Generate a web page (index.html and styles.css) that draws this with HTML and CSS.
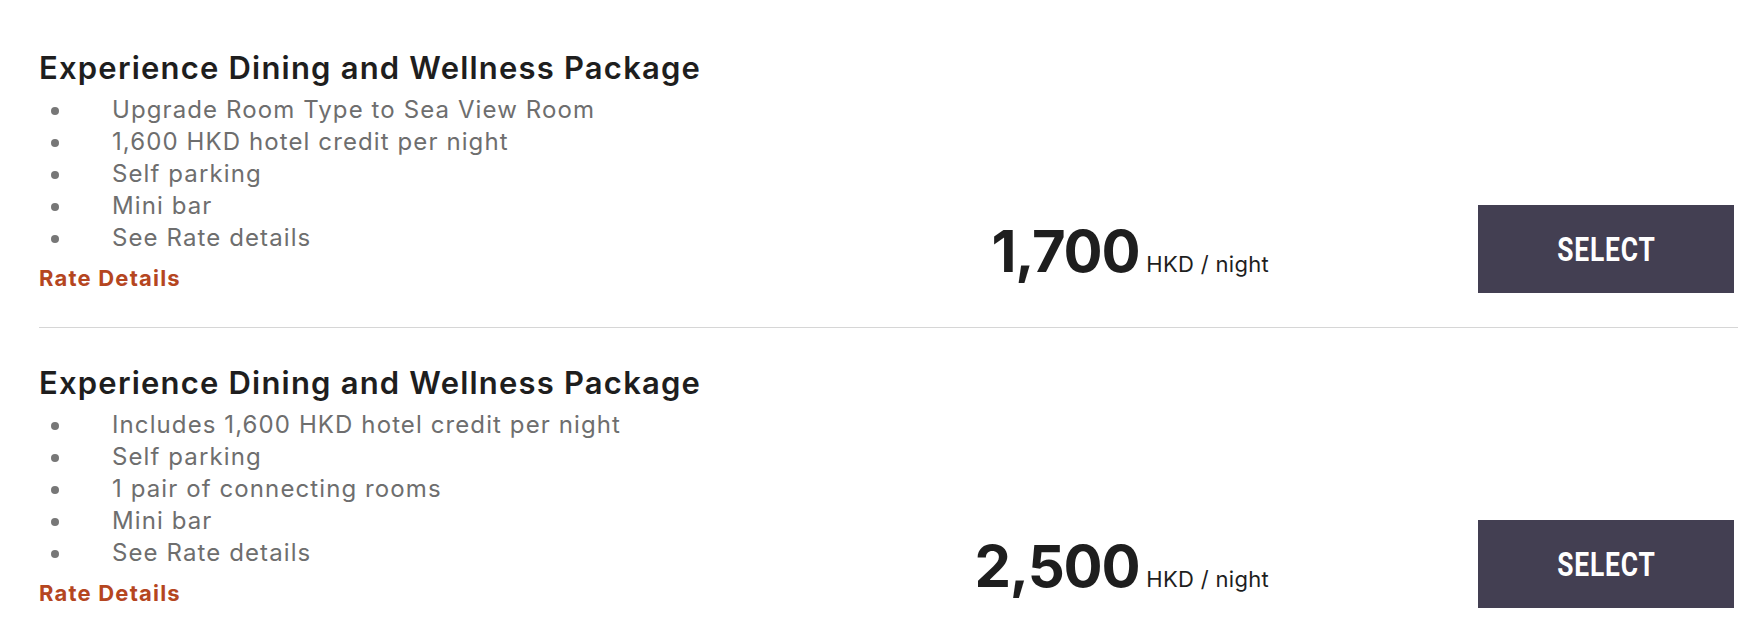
FILE: index.html
```html
<!DOCTYPE html>
<html lang="en">
<head>
    <meta charset="UTF-8">
    <meta name="viewport" content="width=device-width, initial-scale=1.0">
    <title>Rates</title>
    <link rel="stylesheet" href="styles.css">
</head>
<body>
    <div class="rates">
        <div class="rate">
            <div class="rate-info">
                <h3 class="rate-title">Experience Dining and Wellness Package</h3>
                <ul class="rate-perks">
                    <li>Upgrade Room Type to Sea View Room</li>
                    <li>1,600 HKD hotel credit per night</li>
                    <li>Self parking</li>
                    <li>Mini bar</li>
                    <li>See Rate details</li>
                </ul>
                <a class="rate-link" href="#">Rate Details</a>
            </div>
            <div class="rate-price">
                <span class="amount">1,700</span>
                <span class="unit">HKD / night</span>
            </div>
            <button class="select-btn" type="button"><span>SELECT</span></button>
        </div>
        <div class="rate">
            <div class="rate-info">
                <h3 class="rate-title">Experience Dining and Wellness Package</h3>
                <ul class="rate-perks">
                    <li>Includes 1,600 HKD hotel credit per night</li>
                    <li>Self parking</li>
                    <li>1 pair of connecting rooms</li>
                    <li>Mini bar</li>
                    <li>See Rate details</li>
                </ul>
                <a class="rate-link" href="#">Rate Details</a>
            </div>
            <div class="rate-price">
                <span class="amount">2,500</span>
                <span class="unit">HKD / night</span>
            </div>
            <button class="select-btn" type="button"><span>SELECT</span></button>
        </div>
    </div>
</body>
</html>
```

FILE: styles.css
```css
body {
    margin: 0;
    padding: 0;
    background-color: #fff;
    font-family: Inter, "Noto Sans", sans-serif;
    color: #1e1e1e;
}
.rates {
    padding: 13px 24px 0 39px;
}
.rate {
    display: flex;
    align-items: flex-end;
    padding: 37px 0 34px;
    border-bottom: 1px solid #d6d6d6;
}
.rate-info {
    flex: 1;
    margin-bottom: 3px;
}
.rate-title {
    margin: 0;
    font-size: 31px;
    line-height: 36px;
    font-weight: 600;
    letter-spacing: 1.2px;
}
.rate-perks {
    list-style: none;
    margin: 8px 0 0;
    padding: 0;
    font-size: 24px;
    line-height: 32px;
    letter-spacing: 1.1px;
    color: #6e6e6e;
}
.rate-perks li {
    display: flex;
    align-items: center;
}
.rate-perks li::before {
    content: "";
    width: 8px;
    height: 8px;
    border-radius: 50%;
    background-color: #777;
    margin: 2px 53px 0 12px;
    flex-shrink: 0;
}
.rate-link {
    display: block;
    margin-top: 12px;
    font-size: 22px;
    line-height: 24px;
    font-weight: 700;
    letter-spacing: 1.2px;
    color: #b5461f;
    text-decoration: none;
}
.rate-price {
    display: flex;
    align-items: baseline;
    gap: 7px;
    margin: 0 209px 13px 0;
}
.rate-price .amount {
    font-size: 58px;
    line-height: 58px;
    font-weight: 700;
    letter-spacing: -1.2px;
}
.rate-price .unit {
    font-size: 22px;
    font-weight: 400;
    letter-spacing: 0.3px;
}
.select-btn {
    width: 256px;
    height: 88px;
    margin-right: 4px;
    border: none;
    background-color: #433f52;
    color: #fff;
    cursor: pointer;
    font-family: Roboto, sans-serif;
    font-size: 33px;
    font-weight: 700;
    letter-spacing: 1px;
}
.select-btn span {
    display: inline-block;
    transform: scaleX(0.8);
}
```
